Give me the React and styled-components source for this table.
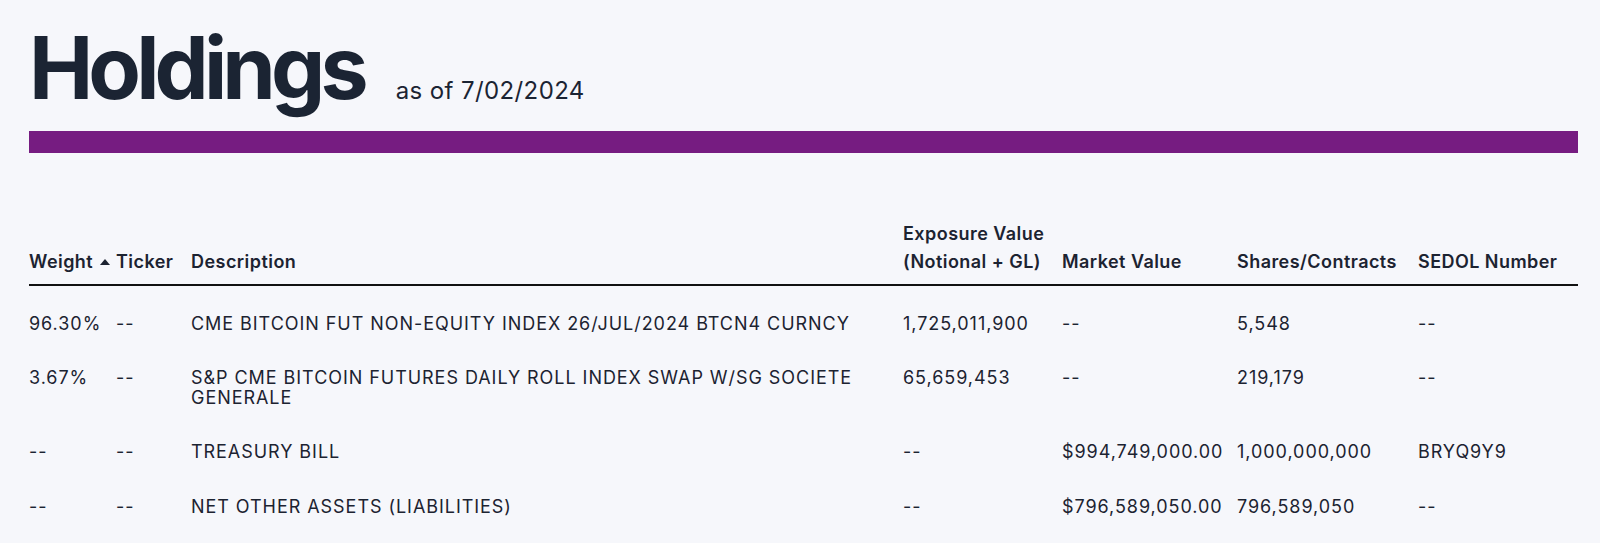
import React from "react";
import styled, { createGlobalStyle } from "styled-components";

const GlobalStyle = createGlobalStyle`
	body {
		margin: 0;
		background: #f6f7fb;
		font-family: Inter, "Noto Sans", sans-serif;
		color: #1c2331;
	}
`;

const Page = styled.div`
	padding: 25px 22px 0 29px;
`;

const Header = styled.div`
	display: flex;
	align-items: baseline;
	gap: 32px;
`;

const Title = styled.h1`
	margin: 0;
	font-size: 86px;
	line-height: 1;
	font-weight: 700;
	letter-spacing: -0.057em;
	color: #1b2433;
`;

const AsOf = styled.span`
	font-size: 24px;
	font-weight: 400;
	letter-spacing: 0.4px;
	color: #1b2433;
`;

const Bar = styled.div`
	margin-top: 20px;
	height: 22px;
	background: #761c81;
`;

const Table = styled.table`
	width: 100%;
	margin-top: 67px;
	border-collapse: collapse;
	table-layout: fixed;
`;

const Col = styled.col`
	width: ${props => props.$width}px;
`;

const Th = styled.th`
	text-align: left;
	vertical-align: bottom;
	font-size: 18px;
	font-weight: 600;
	letter-spacing: 0.45px;
	line-height: 28px;
	padding: 0 0 8px 0;
	border-bottom: 2px solid #111;
	white-space: nowrap;
`;

const SortArrow = styled.span`
	display: inline-block;
	width: 0;
	height: 0;
	margin-left: 7px;
	border-left: 5px solid transparent;
	border-right: 5px solid transparent;
	border-bottom: 6px solid #1c2331;
	vertical-align: 3px;
`;

const Td = styled.td`
	vertical-align: top;
	font-size: 18px;
	letter-spacing: 0.95px;
	line-height: 19.5px;
	padding: 17.5px 10px 17.5px 0;

	tr:first-child > & {
		padding-top: 27.5px;
	}
`;

const columns = [
	{ label: "Weight", width: 87, sorted: true },
	{ label: "Ticker", width: 75 },
	{ label: "Description", width: 712 },
	{ label: ["Exposure Value", "(Notional + GL)"], width: 159 },
	{ label: "Market Value", width: 175 },
	{ label: "Shares/Contracts", width: 181 },
	{ label: "SEDOL Number", width: 160 }
];

const rows = [
	["96.30%", "--", "CME BITCOIN FUT NON-EQUITY INDEX 26/JUL/2024 BTCN4 CURNCY", "1,725,011,900", "--", "5,548", "--"],
	["3.67%", "--", "S&P CME BITCOIN FUTURES DAILY ROLL INDEX SWAP W/SG SOCIETE GENERALE", "65,659,453", "--", "219,179", "--"],
	["--", "--", "TREASURY BILL", "--", "$994,749,000.00", "1,000,000,000", "BRYQ9Y9"],
	["--", "--", "NET OTHER ASSETS (LIABILITIES)", "--", "$796,589,050.00", "796,589,050", "--"]
];

const App = () => {
	return (
		<Page>
			<GlobalStyle />
			<Header>
				<Title>Holdings</Title>
				<AsOf>as of 7/02/2024</AsOf>
			</Header>
			<Bar />
			<Table>
				<colgroup>
					{columns.map((col, i) => (
						<Col key={i} $width={col.width} />
					))}
				</colgroup>
				<thead>
					<tr>
						{columns.map((col, i) => (
							<Th key={i}>
								{Array.isArray(col.label) ? (
									<>
										{col.label[0]}
										<br />
										{col.label[1]}
									</>
								) : (
									col.label
								)}
								{col.sorted ? <SortArrow /> : null}
							</Th>
						))}
					</tr>
				</thead>
				<tbody>
					{rows.map((row, r) => (
						<tr key={r}>
							{row.map((cell, c) => (
								<Td key={c}>{cell}</Td>
							))}
						</tr>
					))}
				</tbody>
			</Table>
		</Page>
	);
};

export default App;
